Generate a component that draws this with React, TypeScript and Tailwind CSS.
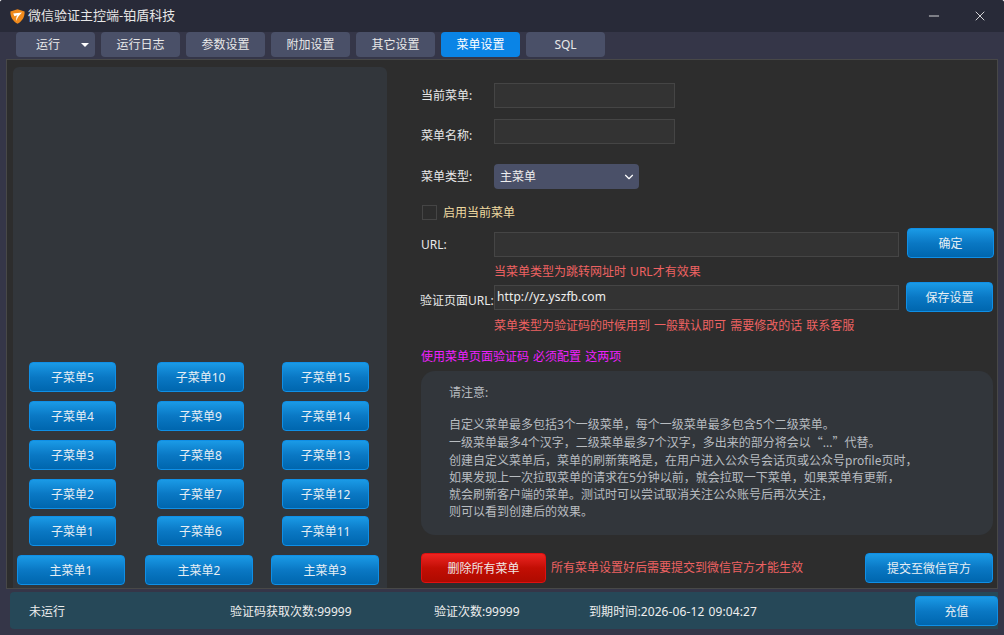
import { ChevronDown, Minus, X } from "lucide-react";
import type { ReactNode } from "react";

const font = { fontFamily: '"Noto Sans", "Noto Sans CJK SC", sans-serif' };

const tabs = ["运行日志", "参数设置", "附加设置", "其它设置", "菜单设置", "SQL"];

const subRows = [
  { names: ["子菜单5", "子菜单10", "子菜单15"], mt: "mt-0" },
  { names: ["子菜单4", "子菜单9", "子菜单14"], mt: "mt-[9px]" },
  { names: ["子菜单3", "子菜单8", "子菜单13"], mt: "mt-[9px]" },
  { names: ["子菜单2", "子菜单7", "子菜单12"], mt: "mt-[9px]" },
  { names: ["子菜单1", "子菜单6", "子菜单11"], mt: "mt-[7px]" },
];

function BlueButton({ children, className }: { children: ReactNode; className: string }) {
  return (
    <button className={`flex h-[30px] shrink-0 items-center justify-center rounded-[4px] border border-[#0f8fe6] bg-gradient-to-b from-[#1a9ae6] via-[#0a78c4] to-[#0066ae] pt-[2px] text-xs text-[#e6eef4] ${className}`}>
      {children}
    </button>
  );
}

function TextBox({ className, children }: { className: string; children?: ReactNode }) {
  return (
    <div className={`flex h-[25px] shrink-0 items-center border border-[#454545] bg-[#333333] px-[2px] pb-[2px] text-xs tracking-[0.1px] text-[#eeeeee] ${className}`}>
      {children}
    </div>
  );
}

function SubRow({ names, mt }: { names: string[]; mt: string }) {
  return (
    <div className={`flex pl-4 ${mt}`}>
      <BlueButton className="w-[87px]">{names[0]}</BlueButton>
      <BlueButton className="ml-[41px] w-[87px]">{names[1]}</BlueButton>
      <BlueButton className="ml-[38px] w-[87px]">{names[2]}</BlueButton>
    </div>
  );
}

function Shield() {
  return (
    <svg width="15" height="15" viewBox="0 0 15 15" className="shrink-0">
      <path d="M7.5 0.3 L14.6 2.6 C14.8 8 12.4 12.2 7.5 14.8 C2.6 12.2 0.2 8 0.4 2.6 Z" fill="#f08a1c" />
      <path d="M3.2 4.6 L12 3.6 L8.8 7 C7.8 8.1 7.1 9.6 6.6 12 C5.9 9.6 6.2 7.8 7.5 6.2 L4.4 7.2 Z" fill="#ffffff" />
    </svg>
  );
}

export default function App() {
  return (
    <div style={font} className="flex h-[635px] w-[1004px] flex-col overflow-hidden rounded-t-[3px] bg-[#353648] text-xs text-[#e8e8e8] [word-spacing:1px]">
      {/* title bar */}
      <div className="flex h-8 shrink-0 items-center bg-[#282a38] pl-[10px]">
        <Shield />
        <span className="ml-[3px] text-[13px] text-[#e6e6e6]">微信验证主控端-铂盾科技</span>
        <Minus size={16} strokeWidth={1.2} className="ml-auto text-white" />
        <X size={16} strokeWidth={1.2} className="ml-[30px] mr-4 text-white" />
      </div>

      {/* tabs */}
      <div className="flex h-[27px] shrink-0 gap-[6px] pl-4">
        <div className="flex h-[25px] w-[79px] items-center rounded-[4px] bg-[#4a5068] text-[#e8e8e8]">
          <span className="ml-5">运行</span>
          <span className="ml-[21px] h-0 w-0 border-x-[4px] border-t-[4px] border-x-transparent border-t-white" />
        </div>
        {tabs.map((t) => (
          <div
            key={t}
            className={`flex h-[25px] w-[79px] items-center justify-center rounded-[4px] ${t === "菜单设置" ? "bg-[#0a84e6] text-white" : "bg-[#4a5068] text-[#e8e8e8]"}`}
          >
            {t}
          </div>
        ))}
      </div>

      {/* main panel */}
      <div className="ml-[6px] flex h-[530px] w-[992px] shrink-0 border border-[#484848] bg-[#2d2d2d]">
        {/* menu tree */}
        <div className="ml-[6px] mt-[7px] flex h-[521px] w-[374px] shrink-0 flex-col justify-end rounded-t-[6px] bg-[#32363b] pb-[3px]">
          {subRows.map((r) => (
            <SubRow key={r.names[0]} names={r.names} mt={r.mt} />
          ))}
          <div className="mt-[9px] flex pl-1">
            <BlueButton className="w-[108px]">主菜单1</BlueButton>
            <BlueButton className="ml-5 w-[108px]">主菜单2</BlueButton>
            <BlueButton className="ml-[18px] w-[108px]">主菜单3</BlueButton>
          </div>
        </div>

        {/* settings */}
        <div className="ml-[34px] flex w-[573px] flex-col pt-[23px]">
          <div className="flex h-[25px] items-center">
            <span className="w-[73px]">当前菜单:</span>
            <TextBox className="w-[181px]" />
          </div>
          <div className="mt-[11px] flex h-[25px] items-center">
            <span className="w-[73px] pt-2">菜单名称:</span>
            <TextBox className="w-[181px]" />
          </div>
          <div className="mt-5 flex h-[25px] items-center">
            <span className="w-[73px]">菜单类型:</span>
            <div className="flex h-[25px] w-[145px] items-center justify-between rounded-[4px] bg-[#4a5068] pl-[6px] pr-[3px] text-[#eeeeee]">
              主菜单
              <ChevronDown size={14} strokeWidth={2} className="text-white" />
            </div>
          </div>
          <div className="mt-4 flex h-[15px] items-center pl-px">
            <span className="h-[15px] w-[15px] border border-[#454545] bg-[#2d2d2d]" />
            <span className="ml-[6px] text-[#efd9a0]">启用当前菜单</span>
          </div>
          <div className="mt-2 flex h-[30px]">
            <span className="w-[73px] pt-[9px]">URL:</span>
            <TextBox className="mt-1 w-[405px]" />
            <BlueButton className="ml-2 w-[87px]">确定</BlueButton>
          </div>
          <div className="ml-[73px] mt-[6px] h-4 leading-4 text-[#ee6262]">当菜单类型为跳转网址时 URL才有效果</div>
          <div className="mt-[2px] flex h-[30px]">
            <span className="-ml-px w-[74px] pt-[11px]">验证页面URL:</span>
            <TextBox className="mt-[3px] w-[405px]">http://yz.yszfb.com</TextBox>
            <BlueButton className="ml-[7px] w-[87px]">保存设置</BlueButton>
          </div>
          <div className="ml-[73px] mt-[6px] h-4 leading-4 text-[#ee6262]">菜单类型为验证码的时候用到 一般默认即可 需要修改的话 联系客服</div>
          <div className="mt-[15px] h-4 leading-4 text-[#f020ff]">使用菜单页面验证码 必须配置 这两项</div>

          <div className="mt-[6px] h-[164px] w-[572px] rounded-[14px] bg-[#32363b] pl-7 pt-[13px] leading-[17.2px] text-[#b8bcc0]">
            <p>请注意:</p>
            <p className="mt-[15px]">自定义菜单最多包括3个一级菜单，每个一级菜单最多包含5个二级菜单。</p>
            <p>
              一级菜单最多4个汉字，二级菜单最多7个汉字，多出来的部分将会以
              <span className="font-['Noto_Sans_CJK_SC']">“</span>...<span className="font-['Noto_Sans_CJK_SC']">”</span>
              代替。
            </p>
            <p>创建自定义菜单后，菜单的刷新策略是，在用户进入公众号会话页或公众号profile页时，</p>
            <p>如果发现上一次拉取菜单的请求在5分钟以前，就会拉取一下菜单，如果菜单有更新，</p>
            <p>就会刷新客户端的菜单。测试时可以尝试取消关注公众账号后再次关注，</p>
            <p>则可以看到创建后的效果。</p>
          </div>

          <div className="mt-[18px] flex h-[30px] items-center">
            <button className="flex h-[30px] w-[125px] items-center justify-center rounded-[4px] border border-[#e01010] bg-gradient-to-b from-[#ee2420] via-[#c20e04] to-[#ae0a00] pt-[2px] text-xs text-[#f0e6e6]">
              删除所有菜单
            </button>
            <span className="ml-[5px] text-[#ee6262]">所有菜单设置好后需要提交到微信官方才能生效</span>
            <BlueButton className="ml-auto mr-[1px] w-[128px]">提交至微信官方</BlueButton>
          </div>
        </div>
      </div>

      {/* status bar */}
      <div className="ml-[10px] mt-[3px] flex h-[37px] w-[988px] shrink-0 items-center rounded-l-[4px] bg-[#264858] pl-[19px] text-[#eeeeee]">
        <span className="w-[201px] pt-[2px]">未运行</span>
        <span className="w-[204px] pt-[2px]">验证码获取次数:99999</span>
        <span className="w-[155px] pt-[2px]">验证次数:99999</span>
        <span className="w-[326px] pt-[2px] tracking-[0.1px]">到期时间:2026-06-12 09:04:27</span>
        <BlueButton className="mt-px w-[83px]">充值</BlueButton>
      </div>
    </div>
  );
}
